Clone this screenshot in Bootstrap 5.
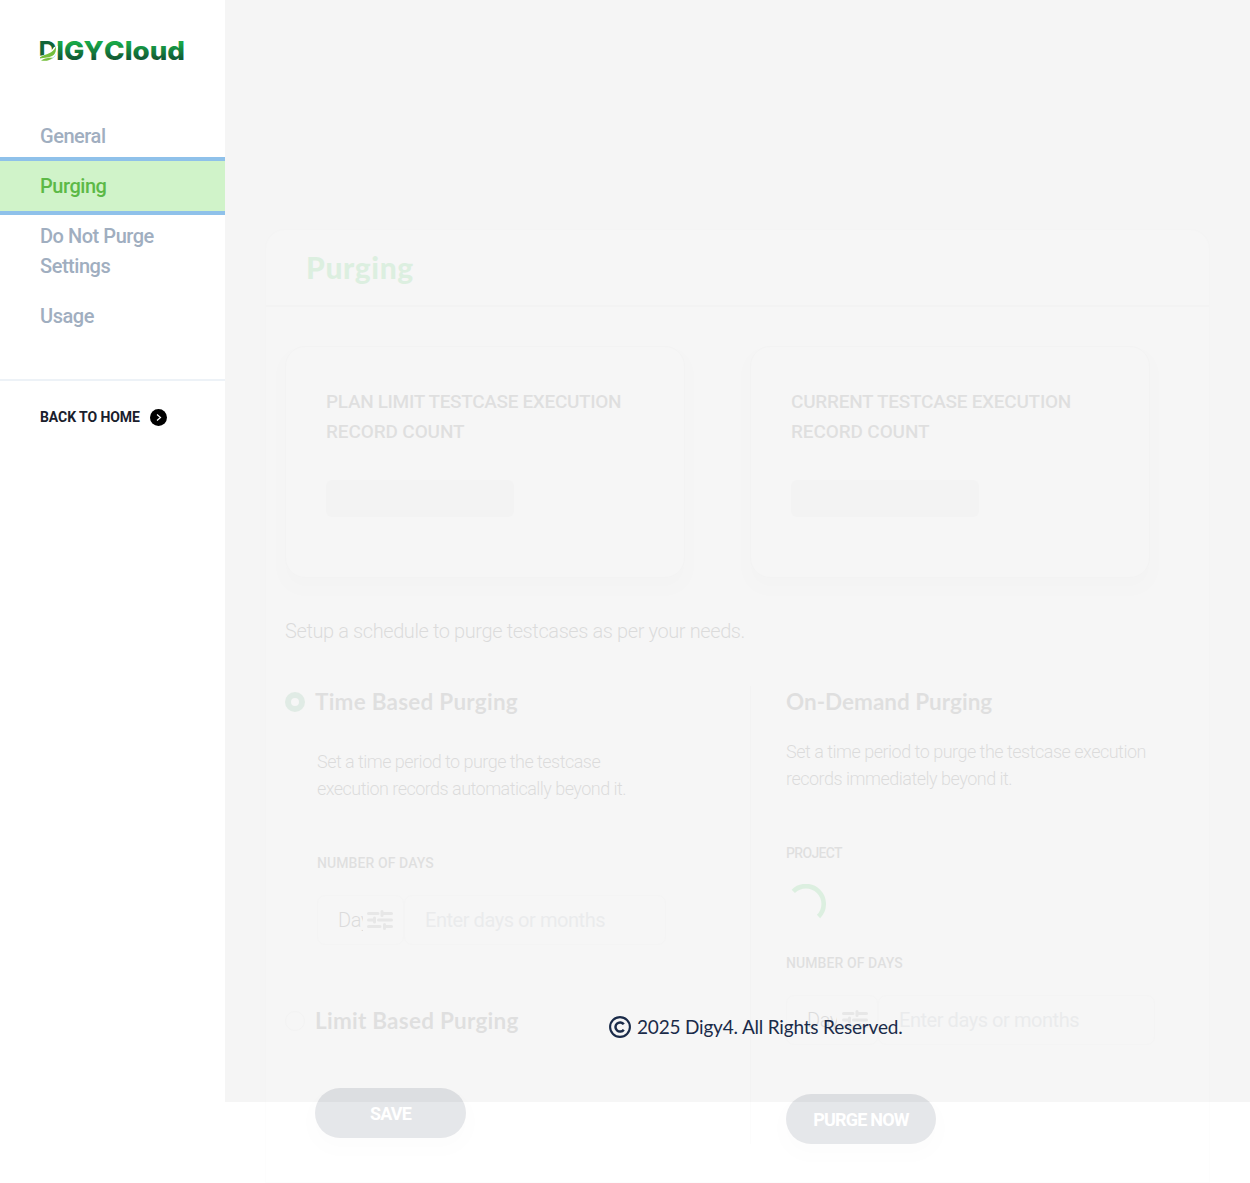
<!DOCTYPE html>
<html lang="en">
<head>
<meta charset="utf-8">
<meta name="viewport" content="width=device-width, initial-scale=1">
<title>DIGYCloud - Purging</title>
<link href="https://cdn.jsdelivr.net/npm/bootstrap@5.3.0/dist/css/bootstrap.min.css" rel="stylesheet">
<style>
body{font-family:Roboto,"Liberation Sans",sans-serif;background:#fff;color:#1a202c;height:1183px;overflow:hidden}
.shell{height:1183px}
.side{width:225px;background:#fff;overflow:hidden}
.logo-box{padding:35px 38px 0;height:111px}
.logo-box svg{display:block;overflow:visible}
.side-menu .nav-link{padding:10px 40px;font-size:20px;line-height:30px;font-weight:500;color:#a0aec0;letter-spacing:-.46px;white-space:nowrap}
.side-menu .nav-link.active{background:#d0f3c9;color:#5cb947;box-shadow:0 0 0 4px #8fc1ea}
.side-rule{height:2px;background:#edf2f7;margin-top:38px}
.home-link{font-size:14px;font-weight:700;line-height:20px;color:#1a202c;padding:26px 40px;gap:10px}
.home-link span{letter-spacing:-.07px;white-space:nowrap}
.stage{width:1025px;height:1102px;background:#f5f5f5;padding:229px 40px 0}
.panel{width:945px;height:954px;background:#fff;border:1px solid #efefef;border-radius:20px 20px 0 0;opacity:.1;color:#2c2c2c}
.panel-head{height:77px;border-bottom:2px solid #e8e8e8;padding:12px 40px 0;font:900 30px/50px Lato,sans-serif;letter-spacing:.6px;color:#10c030}
.panel-main{padding:39px 19px 0}
.stat-row{gap:65px}
.stat{width:400px;height:232px;border:1px solid #e6e6e6;border-radius:20px;padding:40px;font-size:19px;line-height:30px;font-weight:500;letter-spacing:-.34px;white-space:nowrap;box-shadow:0 9px 12px rgba(0,0,0,.08)}
.stat.current{letter-spacing:-.27px}
.stat .second-line{letter-spacing:-.13px}
.skel{width:188px;height:37px;border-radius:6px;background:#e8e8e8;margin-top:33px}
.intro{font-size:20px;line-height:30px;font-weight:300;letter-spacing:-.4px;margin-top:38px;color:#000}
.cols{margin-top:40px}
.col-left{width:465px}
.col-right{width:430px;border-left:1px solid #e6e6e6;padding-left:35px;height:458px}
.sec-title{font:700 22.5px/32px Lato,sans-serif;letter-spacing:.24px;margin:0}
.col-right .sec-title{letter-spacing:0}
.opt{gap:10px}
.indent{padding-left:32px}
.desc{font-size:18px;line-height:27px;font-weight:300;letter-spacing:-.53px;margin:0;color:#000}
.col-left .desc{margin-top:30px}
.col-right .desc{margin-top:20px;letter-spacing:-.5px}
.lbl{font-size:14px;line-height:20px;font-weight:500;letter-spacing:.09px;margin-top:51px}
.lbl.project{letter-spacing:-.67px}
.fields{margin-top:22px}
.fld{height:50px;border:1px solid #eee;border-radius:8px;font-size:20px;line-height:48px;font-weight:300;padding-left:20px;letter-spacing:-.45px;white-space:nowrap}
.unit{width:87px;gap:4px;color:#000}
.entry{width:262px;color:#8d98a6;font-weight:400}
.cut{width:25px;overflow:hidden}
.col-right .unit{width:92px;gap:5px}
.col-right .cut{width:30px}
.col-right .entry{width:277px;padding-left:20px}
.dot{width:20px;height:20px;border-radius:50%;border:6px solid #379f5f}
.dot.off{border:1px solid #e2e2e2}
.limit{margin-top:60px}
.pill{display:block;height:50px;width:151px;border-radius:25px;padding:0;background:#111c38;color:#fff;font-size:18px;font-weight:700;letter-spacing:-.8px;box-shadow:0 9px 12px rgba(0,0,0,.08)}
.save{margin:51px 0 0 30px}
.purge{width:150px;margin-top:49px}
.spin{display:block;margin-top:21px}
.col-right .lbl.days{margin-top:29px}
.foot{position:absolute;left:609px;top:1012px;font:400 19px/30px Lato,sans-serif;color:#1a2b49;gap:6px;letter-spacing:-.19px;white-space:nowrap}
</style>
</head>
<body>
<svg class="d-none"><symbol id="tune" viewBox="0 0 26 20"><path d="M1.500 3.500H11M15 3.500H24.500M15 1.500V5.500M1.500 10H7.500M11.500 10H24.500M7.500 8V12M1.500 16.500H13M17.500 16.500H24.500M17.500 14.500V18.500" fill="none" stroke="#777" stroke-width="3" stroke-linecap="round"/></symbol></svg>
<div class="shell d-flex align-items-start position-relative">
<aside class="side h-100 flex-shrink-0">
<div class="logo-box">
<svg width="150" height="32" viewBox="-2 -3 150 32"><defs><linearGradient id="lg" gradientUnits="userSpaceOnUse" x1="0" y1="3" x2="0" y2="22"><stop offset=".1" stop-color="#18a848"/><stop offset=".9" stop-color="#125c35"/></linearGradient></defs>
<g fill="url(#lg)" font-family="Inter, sans-serif" font-weight="800" font-size="25.500"><text x="-1.500" y="22" fill="#116437" font-weight="700" textLength="18.500" lengthAdjust="spacingAndGlyphs">D</text><text x="16.300" y="22" textLength="47.500" lengthAdjust="spacingAndGlyphs">IGY</text><text x="64" y="22" textLength="81" lengthAdjust="spacingAndGlyphs">Cloud</text></g>
<path d="M-1 18C6 17 11 14 14 9L18 8C18 17 12 25-1 24Z" fill="#fff"/><path d="M0 19.200C6 15.500 13 16 15.800 8.500c1 8-3 10.200-9 11-2 .3-5 .4-6.800 1zM1 22.400c4-2.500 7-2.500 12-3-3 3-7 4-12 3z" fill="#74bf3c"/></svg>
</div>
<nav class="side-menu nav flex-column">
<a class="nav-link" href="#">General</a>
<a class="nav-link active" href="#">Purging</a>
<a class="nav-link" href="#">Do Not Purge<br>Settings</a>
<a class="nav-link" href="#">Usage</a>
</nav>
<div class="side-rule"></div>
<a class="home-link d-flex align-items-center text-decoration-none" href="#"><span>BACK TO HOME</span>
<svg width="17" height="17" viewBox="0 0 17 17"><circle cx="8.500" cy="8.500" r="8.500"/><path d="M7 5.500l3.500 3L7 11.500" fill="none" stroke="#fff" stroke-width="1.200"/></svg></a>
</aside>
<main class="stage">
<section class="panel">
<header class="panel-head">Purging</header>
<div class="panel-main">
<div class="stat-row d-flex">
<div class="stat">PLAN LIMIT TESTCASE EXECUTION<br><span class="second-line">RECORD COUNT</span><div class="skel"></div></div>
<div class="stat current">CURRENT TESTCASE EXECUTION<br><span class="second-line">RECORD COUNT</span><div class="skel"></div></div>
</div>
<div class="intro">Setup a schedule to purge testcases as per your needs.</div>
<div class="cols d-flex">
<div class="col-left">
<div class="opt d-flex align-items-center"><i class="dot"></i><h2 class="sec-title">Time Based Purging</h2></div>
<div class="indent">
<p class="desc">Set a time period to purge the testcase<br>execution records automatically beyond it.</p>
<div class="lbl">NUMBER OF DAYS</div>
<div class="fields d-flex">
<div class="fld unit d-flex align-items-center"><span class="cut">Days</span><svg width="26" height="20"><use href="#tune"/></svg></div>
<div class="fld entry">Enter days or months</div>
</div>
</div>
<div class="opt limit d-flex align-items-center"><i class="dot off"></i><h2 class="sec-title">Limit Based Purging</h2></div>
<button class="btn pill save">SAVE</button>
</div>
<div class="col-right">
<h2 class="sec-title">On-Demand Purging</h2>
<p class="desc">Set a time period to purge the testcase execution<br>records immediately beyond it.</p>
<div class="lbl project">PROJECT</div>
<svg class="spin" width="40" height="40" viewBox="0 0 40 40"><path d="M7.300 7.300A17.700 17.700 0 0 1 32.500 32.500" fill="none" stroke="#10c030" stroke-width="4.600"/></svg>
<div class="lbl days">NUMBER OF DAYS</div>
<div class="fields d-flex">
<div class="fld unit d-flex align-items-center"><span class="cut">Days</span><svg width="26" height="20"><use href="#tune"/></svg></div>
<div class="fld entry">Enter days or months</div>
</div>
<button class="btn pill purge">PURGE NOW</button>
</div>
</div>
</div>
</section>
</main>
<footer class="foot d-flex align-items-center"><svg width="22" height="22" viewBox="0 0 22 22" fill="none" stroke="#1a2b49"><circle cx="11" cy="11" r="9.900" stroke-width="2.100"/><path d="M14.800 8.300A4.600 4.600 0 1 0 14.800 13.700" stroke-width="2.500"/></svg><span>2025 Digy4. All Rights Reserved.</span></footer>
</div>
<script src="https://cdn.jsdelivr.net/npm/bootstrap@5.3.0/dist/js/bootstrap.bundle.min.js"></script>
</body>
</html>
